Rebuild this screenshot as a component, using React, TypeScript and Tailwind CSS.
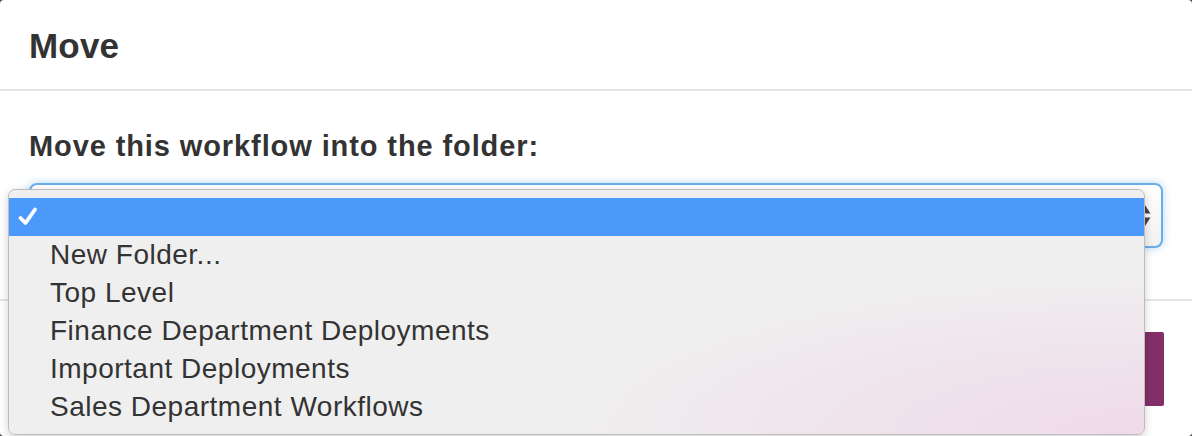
export default function App() {
  const folders = [
    'New Folder...',
    'Top Level',
    'Finance Department Deployments',
    'Important Deployments',
    'Sales Department Workflows',
  ];

  return (
    <div className="w-[1192px] h-[436px] bg-[#4a4a4a] overflow-hidden font-['Liberation_Sans',Arial,sans-serif] text-[#333]">
      <div className="relative w-full h-full bg-white rounded-[4px] overflow-hidden">
        {/* Header */}
        <div className="h-[91px] flex items-center px-[29px] border-b-[2px] border-[#e5e5e5]">
          <h4 className="text-[35px] font-bold leading-none pt-[2px] tracking-[0.2px]">Move</h4>
        </div>

        {/* Body */}
        <div className="h-[210px] px-[29px] pt-[38px] border-b-[2px] border-[#e5e5e5]">
          <label className="block text-[29px] font-bold leading-[34px] tracking-[0.9px]">
            Move this workflow into the folder:
          </label>
          <div className="mt-[20px] w-[1134px] h-[65px] rounded-[8px] border-[2px] border-[#6aaee8] bg-gradient-to-b from-white to-[#f2f2f2] shadow-[0_0_8px_rgba(102,175,233,0.5)] flex items-center justify-end pr-[10px]">
            <svg width="12" height="22" viewBox="0 0 12 22">
              <path d="M6 0 L11.5 8.5 L0.5 8.5 Z" fill="#444" />
              <path d="M6 21 L11.5 12.5 L0.5 12.5 Z" fill="#444" />
            </svg>
          </div>
        </div>

        {/* Footer */}
        <div className="flex justify-end pt-[31px] pr-[28px]">
          <button className="w-[150px] h-[74px] bg-[#832e68] rounded-[2px]" />
        </div>

        {/* Native select popup */}
        <div className="absolute left-[8px] top-[189px] w-[1137px] h-[246px] rounded-[7px] border border-[#bdbdbd] bg-[radial-gradient(ellipse_70%_90%_at_100%_100%,#f0daea_0%,#efe3ec_35%,#efefef_75%)] shadow-[0_3px_10px_rgba(0,0,0,0.18)] py-[8px]">
          <div className="h-[38px] bg-[#4b9afb] flex items-center pl-[9px]">
            <svg width="20" height="20" viewBox="0 0 20 20">
              <path d="M2.5 11 L7.5 16 L17 2.5" fill="none" stroke="white" strokeWidth="3.8" strokeLinecap="round" strokeLinejoin="round" />
            </svg>
          </div>
          {folders.map((name) => (
            <div key={name} className="h-[38px] flex items-center pl-[41px] text-[28px] tracking-[0.5px] text-[#333]">
              {name}
            </div>
          ))}
        </div>
      </div>
    </div>
  );
}
